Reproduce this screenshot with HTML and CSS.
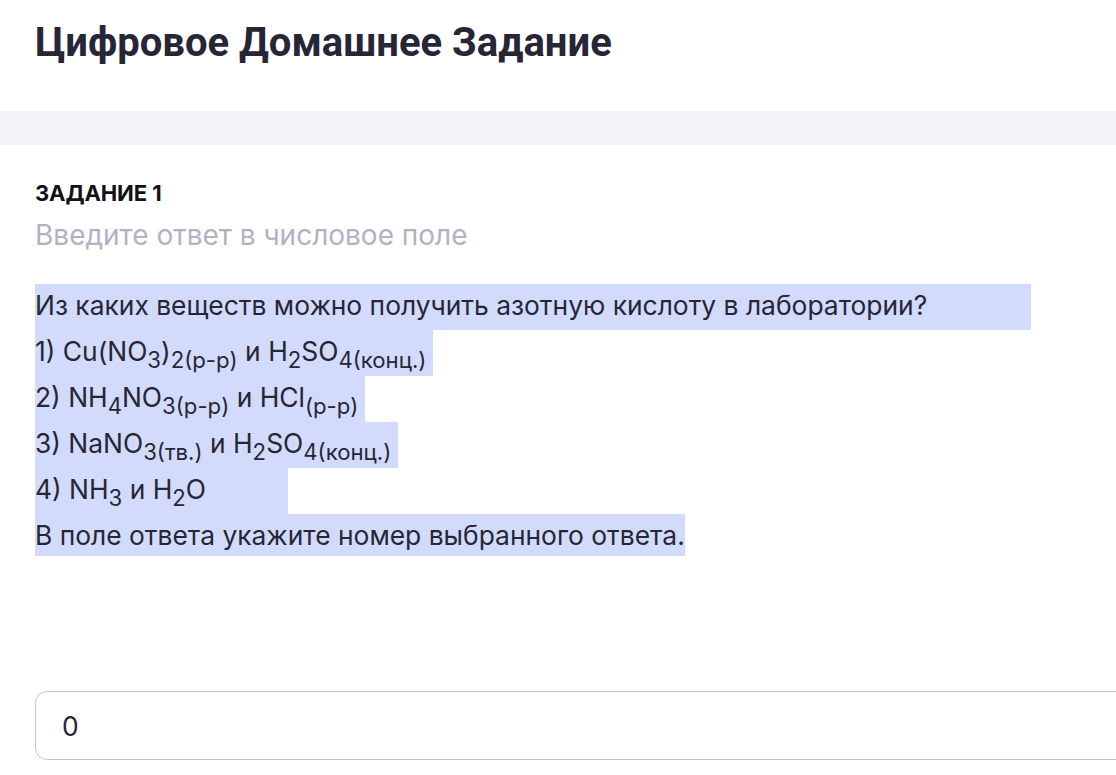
FILE: index.html
```html
<!DOCTYPE html>
<html lang="ru">
<head>
<meta charset="utf-8">
<title>Цифровое Домашнее Задание</title>
<link rel="stylesheet" href="styles.css">
</head>
<body>
<div class="page">
  <header class="header">
    <h1 class="title">Цифровое Домашнее Задание</h1>
  </header>
  <div class="band"></div>
  <section class="task">
    <div class="task-label">ЗАДАНИЕ 1</div>
    <div class="task-hint">Введите ответ в числовое поле</div>
    <div class="question">
      <div class="line"><span class="sel pad-l1">Из каких веществ можно получить азотную кислоту в лаборатории?</span></div>
      <div class="line"><span class="sel pad-s">1) Cu(NO<sub>3</sub>)<sub>2(р-р)</sub> и H<sub>2</sub>SO<sub>4(конц.)</sub></span></div>
      <div class="line"><span class="sel pad-s">2) NH<sub>4</sub>NO<sub>3(р-р)</sub> и HCl<sub>(р-р)</sub></span></div>
      <div class="line"><span class="sel pad-s">3) NaNO<sub>3(тв.)</sub> и H<sub>2</sub>SO<sub>4(конц.)</sub></span></div>
      <div class="line"><span class="sel pad-l4">4) NH<sub>3</sub> и H<sub>2</sub>O</span></div>
      <div class="line line-last"><span class="sel">В поле ответа укажите номер выбранного ответа.</span></div>
    </div>
    <div class="answer">
      <input class="answer-input" type="text" value="0">
    </div>
  </section>
</div>
</body>
</html>
```

FILE: styles.css
```css
html, body {
  margin: 0;
  padding: 0;
  background: #ffffff;
  overflow: hidden;
}
.page {
  width: 1116px;
  height: 775px;
  overflow: hidden;
}
.header {
  padding: 19px 35px 0;
  height: 111px;
  box-sizing: border-box;
}
.title {
  margin: 0;
  font-family: Roboto, "Liberation Sans", sans-serif;
  font-weight: 700;
  font-size: 40px;
  line-height: 48px;
  color: #262637;
}
.band {
  height: 34px;
  background: #f3f3f7;
}
.task {
  padding: 36px 35px 0;
}
.task-label {
  font-family: Inter, "Liberation Sans", sans-serif;
  font-weight: 700;
  font-size: 22px;
  line-height: 24px;
  letter-spacing: -0.1px;
  color: #111118;
}
.task-hint {
  margin-top: 12px;
  font-family: Inter, "Liberation Sans", sans-serif;
  font-size: 28px;
  line-height: 36px;
  color: #b2b2c2;
}
.question {
  margin-top: 31px;
  color: #262637;
  font-family: Inter, "Liberation Sans", sans-serif;
  font-size: 26.4px;
}
.line {
  display: flex;
  height: 46px;
}
.line-last {
  height: 42px;
}
.sel {
  display: block;
  background: #d3dbfc;
  line-height: 42px;
  padding-bottom: 4px;
  white-space: pre;
}
.line-last .sel {
  line-height: 42px;
  padding-bottom: 0;
}
.sel sub {
  font-size: 0.84em;
  position: relative;
  top: 7px;
  vertical-align: baseline;
  line-height: 0;
}
.pad-l1 { padding-right: 104px; }
.pad-s { padding-right: 7px; }
.pad-l4 { padding-right: 82px; }
.answer {
  margin-top: 135px;
}
.answer-input {
  display: block;
  box-sizing: border-box;
  width: 1140px;
  height: 69px;
  border: 1px solid #c6c6c8;
  border-radius: 12px;
  padding: 0 26px;
  font-family: Inter, "Liberation Sans", sans-serif;
  font-size: 26.4px;
  color: #262637;
  background: #fff;
  outline: none;
}
```
